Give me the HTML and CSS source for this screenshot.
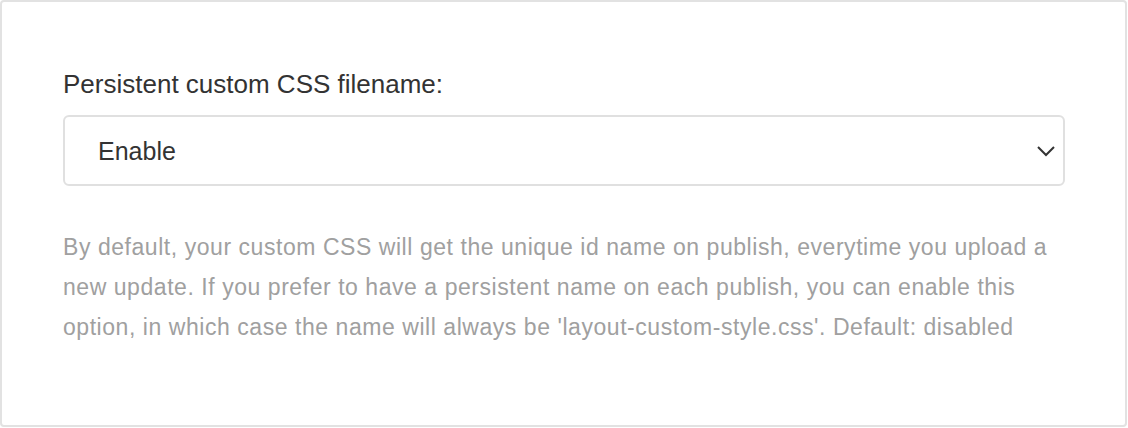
FILE: index.html
```html
<!DOCTYPE html>
<html>
<head>
<meta charset="utf-8">
<link rel="stylesheet" href="styles.css">
</head>
<body>
<div class="card">
  <label class="label">Persistent custom CSS filename:</label>
  <div class="select">
    <span class="value">Enable</span>
    <svg class="chev" width="18" height="11" viewBox="0 0 18 11"><path d="M1 1 L9 9 L17 1" fill="none" stroke="#333" stroke-width="2"/></svg>
  </div>
  <p class="help">By default, your custom CSS will get the unique id name on publish, everytime you upload a new update. If you prefer to have a persistent name on each publish, you can enable this option, in which case the name will always be 'layout-custom-style.css'. Default: disabled</p>
</div>
</body>
</html>
```
FILE: styles.css
```css
html, body { margin: 0; padding: 0; background: #fff; }
body { font-family: "Liberation Sans", Arial, sans-serif; }
.card {
  box-sizing: border-box;
  width: 1127px;
  height: 427px;
  border: 2px solid #e2e2e2;
  border-radius: 4px;
  padding: 66px 62px 0 61px;
}
.label {
  display: block;
  font-size: 26px;
  line-height: 32px;
  color: #333;
  margin-bottom: 15px;
}
.select {
  box-sizing: border-box;
  width: 1002px;
  height: 71px;
  border: 2px solid #e0e0e0;
  border-radius: 6px;
  display: flex;
  align-items: center;
  justify-content: space-between;
  padding: 1px 8px 0 33px;
}
.value { font-size: 25px; color: #333; }
.chev { display: block; margin-top: 1px; }
.help {
  margin: 41px 0 0;
  font-size: 23px;
  letter-spacing: 0.55px;
  line-height: 40px;
  color: #a0a0a0;
}
```
